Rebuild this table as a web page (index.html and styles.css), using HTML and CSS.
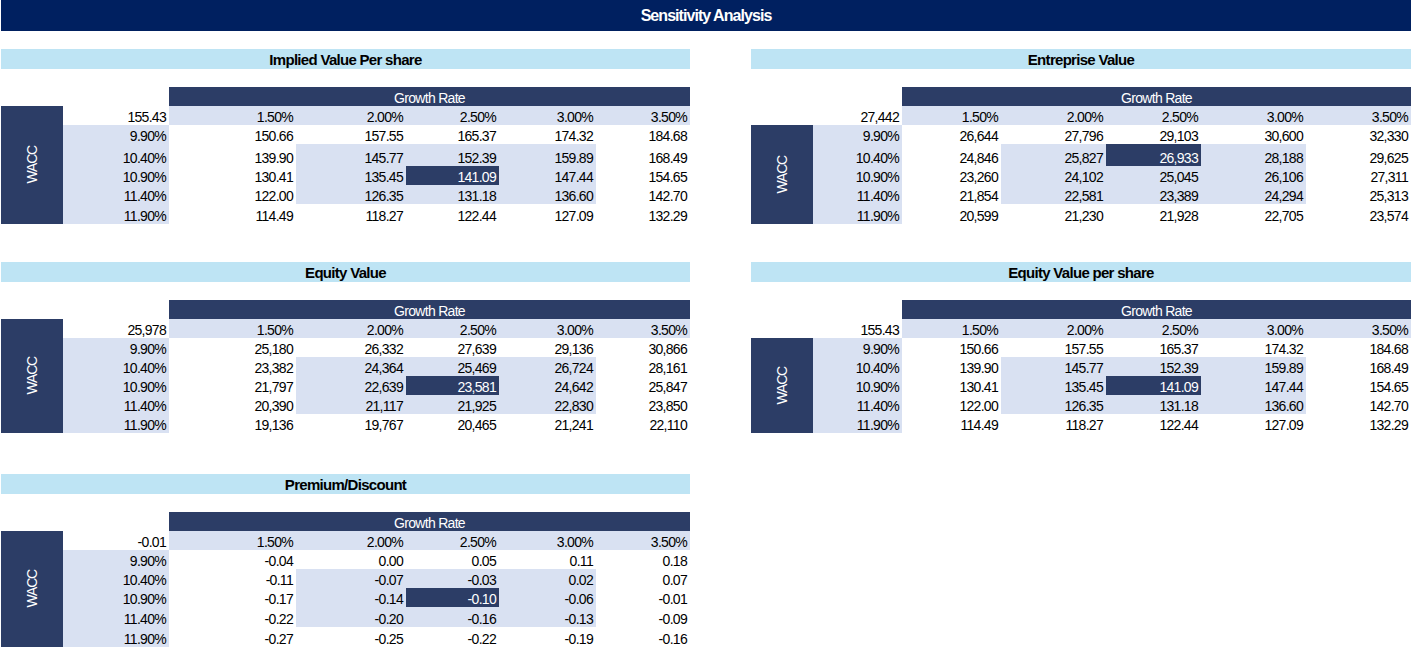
FILE: index.html
```html
<!DOCTYPE html>
<html lang="en">
<head>
<meta charset="utf-8">
<title>Sensitivity Analysis</title>
<link rel="stylesheet" href="styles.css">
</head>
<body>
<div class="title">Sensitivity Analysis</div>

<div class="band band-1">
  <section class="panel">
    <div class="section-title">Implied Value Per share</div>
    <div class="sens sens-left rows-1">
      <div class="blank2"></div><div class="growth">Growth Rate</div>
      <div class="wacc"><span>WACC</span></div>
      <div class="c">155.43</div><div class="c t">1.50%</div><div class="c t">2.00%</div><div class="c t">2.50%</div><div class="c t">3.00%</div><div class="c t">3.50%</div>
      <div class="c t">9.90%</div><div class="c">150.66</div><div class="c">157.55</div><div class="c">165.37</div><div class="c">174.32</div><div class="c">184.68</div>
      <div class="c t">10.40%</div><div class="c">139.90</div><div class="c t">145.77</div><div class="c t">152.39</div><div class="c t">159.89</div><div class="c">168.49</div>
      <div class="c t">10.90%</div><div class="c">130.41</div><div class="c t">135.45</div><div class="c hl">141.09</div><div class="c t">147.44</div><div class="c">154.65</div>
      <div class="c t">11.40%</div><div class="c">122.00</div><div class="c t">126.35</div><div class="c t">131.18</div><div class="c t">136.60</div><div class="c">142.70</div>
      <div class="c t">11.90%</div><div class="c">114.49</div><div class="c">118.27</div><div class="c">122.44</div><div class="c">127.09</div><div class="c">132.29</div>
    </div>
  </section>
  <section class="panel">
    <div class="section-title">Entreprise Value</div>
    <div class="sens sens-right rows-1">
      <div class="blank2"></div><div class="growth">Growth Rate</div>
      <div class="wacc"><span>WACC</span></div>
      <div class="c"></div><div class="c">27,442</div><div class="c t">1.50%</div><div class="c t">2.00%</div><div class="c t">2.50%</div><div class="c t">3.00%</div><div class="c t">3.50%</div>
      <div class="c t">9.90%</div><div class="c">26,644</div><div class="c">27,796</div><div class="c">29,103</div><div class="c">30,600</div><div class="c">32,330</div>
      <div class="c t">10.40%</div><div class="c">24,846</div><div class="c t">25,827</div><div class="c hl">26,933</div><div class="c t">28,188</div><div class="c">29,625</div>
      <div class="c t">10.90%</div><div class="c">23,260</div><div class="c t">24,102</div><div class="c t">25,045</div><div class="c t">26,106</div><div class="c">27,311</div>
      <div class="c t">11.40%</div><div class="c">21,854</div><div class="c t">22,581</div><div class="c t">23,389</div><div class="c t">24,294</div><div class="c">25,313</div>
      <div class="c t">11.90%</div><div class="c">20,599</div><div class="c">21,230</div><div class="c">21,928</div><div class="c">22,705</div><div class="c">23,574</div>
    </div>
  </section>
</div>

<div class="band band-2">
  <section class="panel">
    <div class="section-title">Equity Value</div>
    <div class="sens sens-left rows-2">
      <div class="blank2"></div><div class="growth">Growth Rate</div>
      <div class="wacc"><span>WACC</span></div>
      <div class="c">25,978</div><div class="c t">1.50%</div><div class="c t">2.00%</div><div class="c t">2.50%</div><div class="c t">3.00%</div><div class="c t">3.50%</div>
      <div class="c t">9.90%</div><div class="c">25,180</div><div class="c">26,332</div><div class="c">27,639</div><div class="c">29,136</div><div class="c">30,866</div>
      <div class="c t">10.40%</div><div class="c">23,382</div><div class="c t">24,364</div><div class="c t">25,469</div><div class="c t">26,724</div><div class="c">28,161</div>
      <div class="c t">10.90%</div><div class="c">21,797</div><div class="c t">22,639</div><div class="c hl">23,581</div><div class="c t">24,642</div><div class="c">25,847</div>
      <div class="c t">11.40%</div><div class="c">20,390</div><div class="c t">21,117</div><div class="c t">21,925</div><div class="c t">22,830</div><div class="c">23,850</div>
      <div class="c t">11.90%</div><div class="c">19,136</div><div class="c">19,767</div><div class="c">20,465</div><div class="c">21,241</div><div class="c">22,110</div>
    </div>
  </section>
  <section class="panel">
    <div class="section-title">Equity Value per share</div>
    <div class="sens sens-right rows-2">
      <div class="blank2"></div><div class="growth">Growth Rate</div>
      <div class="wacc"><span>WACC</span></div>
      <div class="c"></div><div class="c">155.43</div><div class="c t">1.50%</div><div class="c t">2.00%</div><div class="c t">2.50%</div><div class="c t">3.00%</div><div class="c t">3.50%</div>
      <div class="c t">9.90%</div><div class="c">150.66</div><div class="c">157.55</div><div class="c">165.37</div><div class="c">174.32</div><div class="c">184.68</div>
      <div class="c t">10.40%</div><div class="c">139.90</div><div class="c t">145.77</div><div class="c t">152.39</div><div class="c t">159.89</div><div class="c">168.49</div>
      <div class="c t">10.90%</div><div class="c">130.41</div><div class="c t">135.45</div><div class="c hl">141.09</div><div class="c t">147.44</div><div class="c">154.65</div>
      <div class="c t">11.40%</div><div class="c">122.00</div><div class="c t">126.35</div><div class="c t">131.18</div><div class="c t">136.60</div><div class="c">142.70</div>
      <div class="c t">11.90%</div><div class="c">114.49</div><div class="c">118.27</div><div class="c">122.44</div><div class="c">127.09</div><div class="c">132.29</div>
    </div>
  </section>
</div>

<div class="band band-3">
  <section class="panel">
    <div class="section-title">Premium/Discount</div>
    <div class="sens sens-left rows-3">
      <div class="blank2"></div><div class="growth">Growth Rate</div>
      <div class="wacc"><span>WACC</span></div>
      <div class="c">-0.01</div><div class="c t">1.50%</div><div class="c t">2.00%</div><div class="c t">2.50%</div><div class="c t">3.00%</div><div class="c t">3.50%</div>
      <div class="c t">9.90%</div><div class="c">-0.04</div><div class="c">0.00</div><div class="c">0.05</div><div class="c">0.11</div><div class="c">0.18</div>
      <div class="c t">10.40%</div><div class="c">-0.11</div><div class="c t">-0.07</div><div class="c t">-0.03</div><div class="c t">0.02</div><div class="c">0.07</div>
      <div class="c t">10.90%</div><div class="c">-0.17</div><div class="c t">-0.14</div><div class="c hl">-0.10</div><div class="c t">-0.06</div><div class="c">-0.01</div>
      <div class="c t">11.40%</div><div class="c">-0.22</div><div class="c t">-0.20</div><div class="c t">-0.16</div><div class="c t">-0.13</div><div class="c">-0.09</div>
      <div class="c t">11.90%</div><div class="c">-0.27</div><div class="c">-0.25</div><div class="c">-0.22</div><div class="c">-0.19</div><div class="c">-0.16</div>
    </div>
  </section>
  <section class="panel"></section>
</div>
</body>
</html>
```
FILE: styles.css
```css
html, body {
  margin: 0;
  background: #ffffff;
}
body {
  padding: 0 0 0 1px;
  font-family: "Liberation Sans", Arial, sans-serif;
  color: #000000;
}

.title {
  width: 1410px;
  height: 31px;
  background: #002060;
  color: #ffffff;
  font-weight: bold;
  font-size: 16px;
  letter-spacing: -0.95px;
  line-height: 18px;
  display: flex;
  align-items: center;
  justify-content: center;
}

.band {
  display: grid;
  grid-template-columns: 689px 660px;
  column-gap: 61px;
}
.band-1 { margin-top: 18px; }
.band-2 { margin-top: 38px; }
.band-3 { margin-top: 41px; }

.section-title {
  height: 20px;
  background: #bee4f4;
  font-weight: bold;
  font-size: 15px;
  letter-spacing: -0.7px;
  line-height: 17px;
  display: flex;
  align-items: center;
  justify-content: center;
}

.sens {
  margin-top: 18px;
  display: grid;
  font-size: 14px;
  letter-spacing: -0.7px;
  line-height: 16px;
}
.sens-left { grid-template-columns: 62px 106px 127px 110px 93px 97px 94px; }
.sens-right { grid-template-columns: 62px 89px 99px 105px 95px 105px 105px; }

.rows-1 { grid-template-rows: 19px 19px 19px 22px 19px 19px 20px; }
.rows-2 { grid-template-rows: 19px 19px 19px 19px 19px 19px 19px; }
.rows-3 { grid-template-rows: 19px 19px 19px 19px 19px 20px 20px; }

.blank2 { grid-column: span 2; }

.growth {
  grid-column: span 5;
  background: #2c3d66;
  color: #ffffff;
  display: flex;
  align-items: flex-end;
  justify-content: center;
}

.wacc {
  grid-column: 1;
  grid-row: 2 / 8;
  background: #2c3d66;
  color: #ffffff;
  display: flex;
  align-items: center;
  justify-content: center;
  letter-spacing: -1.2px;
}
.sens-right .wacc { grid-row: 3 / 8; }
.wacc span {
  writing-mode: vertical-rl;
  transform: rotate(180deg);
}

.c {
  display: flex;
  align-items: flex-end;
  justify-content: flex-end;
  padding-right: 3px;
  white-space: nowrap;
}
.t { background: #d9e1f2; }
.hl { background: #2c3d66; color: #ffffff; }
```
